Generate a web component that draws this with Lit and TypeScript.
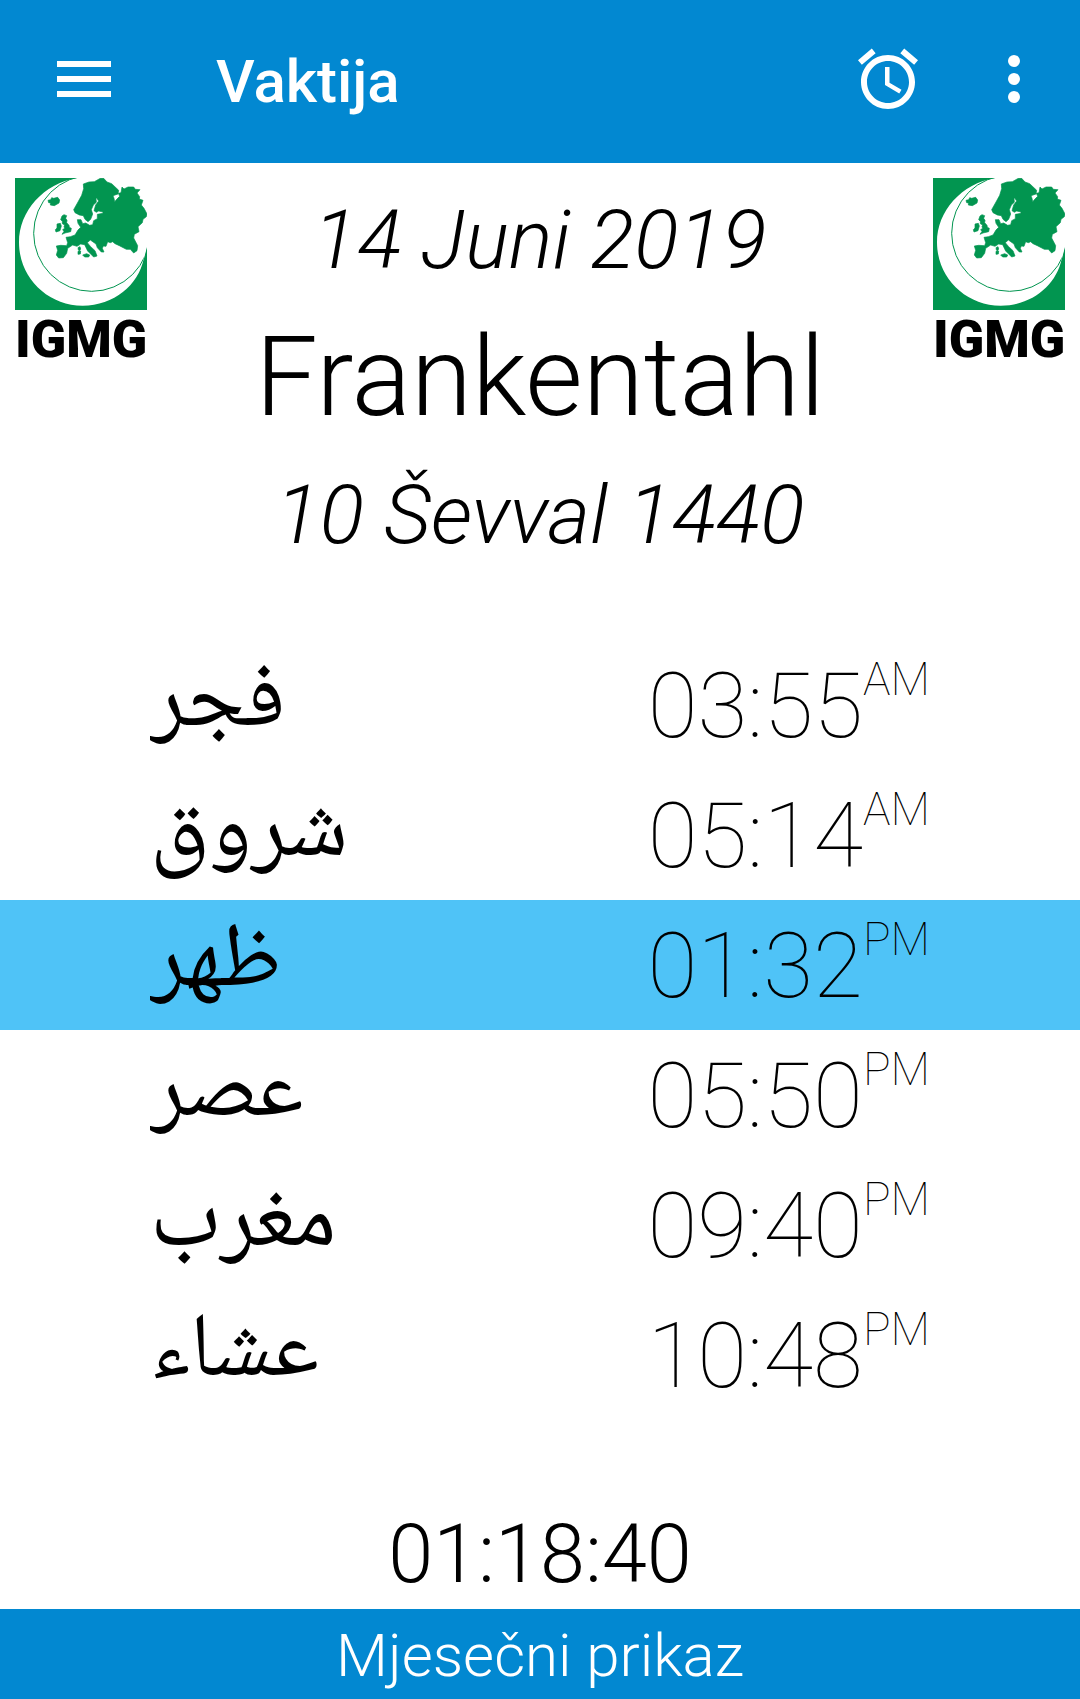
import { LitElement, html, svg, css } from "lit";

interface Prayer {
  name: string;
  time: string;
  period: string;
}

const PRAYERS: Prayer[] = [
  { name: "فجر", time: "03:55", period: "AM" },
  { name: "شروق", time: "05:14", period: "AM" },
  { name: "ظهر", time: "01:32", period: "PM" },
  { name: "عصر", time: "05:50", period: "PM" },
  { name: "مغرب", time: "09:40", period: "PM" },
  { name: "عشاء", time: "10:48", period: "PM" },
];

class IgmgLogo extends LitElement {
  static styles = css`
    :host {
      display: block;
      width: 132px;
    }
    .mark {
      display: block;
      width: 100%;
    }
    .word {
      margin-top: 4px;
      font: 900 52px/52px Roboto, "Liberation Sans", sans-serif;
      white-space: nowrap;
      text-align: center;
    }
  `;

  render() {
    return html`
      <svg class="mark" viewBox="0 0 396 396" aria-hidden="true">
        <defs><clipPath id="box"><rect width="396" height="396" /></clipPath></defs>
        <rect width="396" height="396" fill="#029550" />
        <g clip-path="url(#box)">
          <path d="M187 0C85 17 12 99 12 193C12 298 97 383 203 383C297 383 370 321 386 243L396 201V0Z" fill="#fff" />
          <circle cx="230" cy="166" r="174" fill="none" stroke="#029550" stroke-width="3" />
          <path d="M215 0H396V206L385 249C400 141 355 41 215 0Z" fill="#fff" />
        </g>
        ${this.europe()}
      </svg>
      <div class="word">IGMG</div>
    `;
  }

  private europe() {
    return svg`
      <g fill="#029550" stroke="#029550" stroke-width="2" stroke-linejoin="round">
        <path d="M99 67L107 65L110 59L116 61L128 58L134 66L132 75L118 83L106 81L107 75L101 74Z" />
        <path d="M141 114L147 110L155 113L152 121L156 127L155 134L162 142L163 148L169 151L167 161L150 165L141 169L147 160L143 155L149 151L147 146L149 141L142 137L142 130L137 125Z" />
        <path d="M126 138L136 136L139 144L135 158L123 162L121 155L126 150Z" />
        <path d="M205 18L222 12L238 11L256 1L266 1L276 12L290 17L311 37L309 48L294 53L297 61L299 71L306 63L314 55L310 46L318 44L321 27L327 33L339 27L356 27L361 34L375 35L366 45L374 56L373 63L384 67L379 81L387 91L396 108L394 116L384 124L382 134L369 146L372 161L358 169L356 180L368 203L366 218L356 225L346 214L334 214L313 203L300 197L293 191L286 194L278 191L273 205L265 204L262 211L267 222L259 222L247 209L243 198L226 186L217 194L227 206L240 218L246 234L236 237L218 219L209 200L197 198L186 205L173 201L158 211L155 226L145 239L131 240L124 231L128 217L124 204L137 202L155 203L158 194L153 178L166 176L180 171L189 156L197 148L189 136L187 125L198 125L203 137L212 135L224 142L233 140L236 128L247 122L247 109L264 106L264 102L251 99L244 103L237 98L242 81L251 69L245 60L243 61L244 73L235 81L229 95L233 108L227 124L219 131L210 124L205 113L193 111L180 104L176 95L189 72L200 52L206 32Z" />
        <path d="M189 209L195 206L197 213L193 219L190 215Z" />
        <path d="M189 220L197 219L196 228L189 229Z" />
        <path d="M203 231L215 227L224 231L221 237L209 237Z" />
      </g>
    `;
  }
}
customElements.define("igmg-logo", IgmgLogo);

class AppRoot extends LitElement {
  static properties = { current: { type: Number } };

  declare current: number;

  constructor() {
    super();
    this.current = 2;
  }

  static styles = css`
    :host {
      display: flex;
      flex-direction: column;
      min-height: 100vh;
      background: #fff;
      color: #000;
      font-family: Roboto, sans-serif;
      font-weight: 300;
    }
    .bar {
      display: flex;
      align-items: stretch;
      height: 163px;
      padding: 0 30px 0 48px;
      box-sizing: border-box;
      background: #0288d1;
      color: #fff;
    }
    .icon {
      display: flex;
      align-items: center;
      justify-content: center;
      width: 72px;
      margin: 0;
      padding: 0 0 5px;
      border: 0;
      background: none;
      color: inherit;
      cursor: pointer;
    }
    .icon svg {
      display: block;
      fill: currentColor;
    }
    .title {
      flex: 1;
      margin: 0 0 0 96px;
      font-size: 60px;
      font-weight: 500;
      line-height: 163px;
    }
    .actions {
      display: flex;
      gap: 54px;
    }
    .intro {
      display: flex;
      justify-content: space-between;
      align-items: flex-start;
      padding: 15px;
    }
    .heading {
      text-align: center;
    }
    .date {
      margin: 0;
      font-size: 82px;
      font-style: italic;
      line-height: 124px;
    }
    .city {
      margin: 0;
      font-size: 111px;
      font-weight: 300;
      line-height: 151px;
    }
    .times {
      width: 100%;
      margin-top: 48px;
      border-collapse: collapse;
    }
    .times th,
    .times td {
      height: 130px;
      padding: 0 150px;
      line-height: 132px;
      vertical-align: top;
    }
    .name,
    .time {
      display: block;
      height: 130px;
    }
    .name {
      overflow-x: clip;
      line-height: 124px;
    }
    .times th {
      padding-right: 0;
      font-family: "Noto Naskh Arabic UI", "Noto Naskh Arabic", "DejaVu Sans", sans-serif;
      font-size: 91px;
      font-weight: 400;
      text-align: left;
    }
    .times td {
      padding-left: 0;
      font-size: 91px;
      font-weight: 100;
      text-align: right;
    }
    .current {
      background: #4fc3f7;
    }
    .period {
      font-size: 46px;
      line-height: 0;
      vertical-align: 42px;
    }
    .countdown {
      margin-top: auto;
      font-size: 81px;
      line-height: 108px;
      text-align: center;
    }
    .monthly {
      height: 90px;
      padding: 4px 0 0;
      border: 0;
      background: #0288d1;
      color: #fff;
      font: 300 60px/86px Roboto, sans-serif;
      cursor: pointer;
    }
  `;

  render() {
    return html`
      <header class="bar">
        <button class="icon" aria-label="Meni">
          <svg width="54" height="36" viewBox="0 0 54 36"><path d="M0 0h54v6H0zM0 15h54v6H0zM0 30h54v6H0z" /></svg>
        </button>
        <h1 class="title">Vaktija</h1>
        <div class="actions">
          <button class="icon" aria-label="Alarm">
            <svg width="72" height="72" viewBox="0 0 24 24">
              <path d="M22 5.72l-4.6-3.86-1.29 1.53 4.6 3.86L22 5.72zM7.88 3.39L6.6 1.86 2 5.71l1.29 1.53 4.59-3.85zM12.5 8H11v6l4.75 2.85.75-1.23-4-2.37V8zM12 4c-4.97 0-9 4.03-9 9s4.02 9 9 9c4.97 0 9-4.03 9-9s-4.03-9-9-9zm0 16c-3.87 0-7-3.13-7-7s3.13-7 7-7 7 3.13 7 7-3.13 7-7 7z" />
            </svg>
          </button>
          <button class="icon" aria-label="Više">
            <svg width="72" height="72" viewBox="0 0 24 24">
              <circle cx="12" cy="6" r="2" /><circle cx="12" cy="12" r="2" /><circle cx="12" cy="18" r="2" />
            </svg>
          </button>
        </div>
      </header>
      <section class="intro">
        <igmg-logo></igmg-logo>
        <div class="heading">
          <p class="date">14 Juni 2019</p>
          <h2 class="city">Frankentahl</h2>
          <p class="date">10 Ševval 1440</p>
        </div>
        <igmg-logo></igmg-logo>
      </section>
      <table class="times">
        <tbody>
          ${PRAYERS.map(
            (p, i) => html`
              <tr class=${i === this.current ? "current" : ""}>
                <th scope="row" lang="ar"><span class="name">${p.name}</span></th>
                <td><span class="time">${p.time}<span class="period">${p.period}</span></span></td>
              </tr>
            `
          )}
        </tbody>
      </table>
      <div class="countdown" role="timer">01:18:40</div>
      <button class="monthly">Mjesečni prikaz</button>
    `;
  }
}
customElements.define("app-root", AppRoot);
